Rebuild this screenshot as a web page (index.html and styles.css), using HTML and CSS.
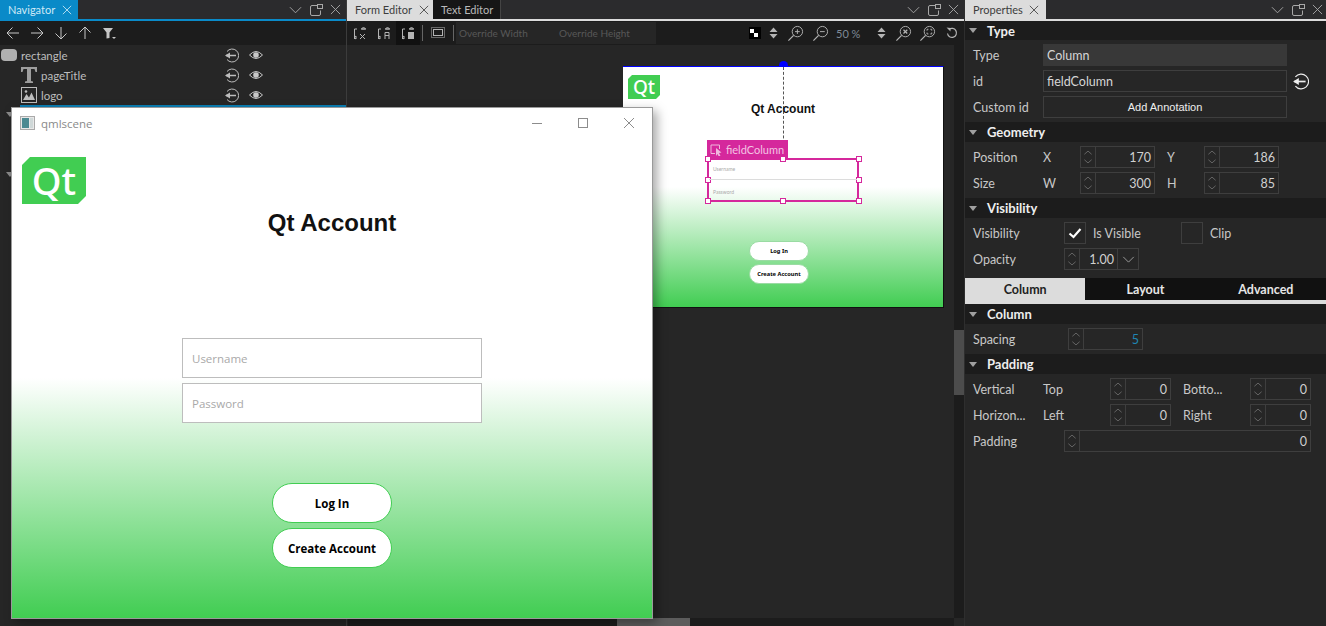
FILE: index.html
```html
<!DOCTYPE html>
<html lang="en">
<head>
<meta charset="utf-8">
<title>Qt Design Studio</title>
<link rel="stylesheet" href="styles.css">
</head>
<body>
<svg class="defs" width="0" height="0">
  <defs>
    <symbol id="i-chev" viewBox="0 0 14 8"><path d="M1 1L7 7L13 1" fill="none" stroke="currentColor"/></symbol>
    <symbol id="i-float" viewBox="0 0 14 14"><path d="M9 2.500H3Q1.500 2.500 1.500 4V11Q1.500 12.500 3 12.500H10Q11.500 12.500 11.500 11V7.500" fill="none" stroke="currentColor"/><rect x="8.500" y="1.500" width="5" height="4" fill="none" stroke="currentColor"/></symbol>
    <symbol id="i-x" viewBox="0 0 12 12"><path d="M1 1L11 11M11 1L1 11" fill="none" stroke="currentColor"/></symbol>
    <symbol id="i-link" viewBox="0 0 15 15"><path d="M3 3.500A6.500 6.500 0 1 1 3 11.500" fill="none" stroke="currentColor"/><path d="M2 7.500H12" stroke="currentColor" stroke-width="1.500"/><path d="M1 7.500L6 4.500V10.500Z" fill="currentColor"/></symbol>
    <symbol id="i-eye" viewBox="0 0 14 10"><path d="M.5 5Q7 -2 13.500 5Q7 12 .5 5Z" fill="none" stroke="currentColor"/><circle cx="7" cy="5" r="2.800" fill="currentColor"/></symbol>
    <symbol id="i-spin" viewBox="0 0 15 22"><path d="M3.500 8L7.500 4.500L11.500 8M3.500 14L7.500 17.500L11.500 14" fill="none" stroke="#6a6a6a"/></symbol>
    <symbol id="i-updown" viewBox="0 0 9 12"><path d="M.5 5L4.500 .5L8.500 5ZM.5 7L4.500 11.500L8.500 7Z" fill="currentColor"/></symbol>
    <symbol id="i-zoom" viewBox="0 0 18 18"><circle cx="11" cy="7" r="5.500" fill="none" stroke="currentColor"/><path d="M7 11L1.500 16.500" stroke="currentColor" stroke-width="1.300"/></symbol>
    <symbol id="i-caret" viewBox="0 0 8 5"><path d="M0 0H8L4 5Z" fill="currentColor"/></symbol>
  </defs>
</svg>

<div class="desktop">
  <section class="panel nav-panel">
    <div class="tabbar">
      <div class="tab tab-blue">Navigator <svg class="tab-x"><use href="#i-x"/></svg></div>
      <div class="tab-actions">
        <svg class="act-chev"><use href="#i-chev"/></svg>
        <svg class="act-float"><use href="#i-float"/></svg>
        <svg class="act-x"><use href="#i-x"/></svg>
      </div>
    </div>
    <div class="strip strip-blue"></div>
    <div class="toolbar nav-tools">
      <svg class="tool" viewBox="0 0 14 14"><path d="M13 7H1M6.500 1.500L1 7L6.500 12.500" fill="none" stroke="currentColor"/></svg>
      <svg class="tool" viewBox="0 0 14 14"><path d="M1 7H13M7.500 1.500L13 7L7.500 12.500" fill="none" stroke="currentColor"/></svg>
      <svg class="tool" viewBox="0 0 14 14"><path d="M7 1V13M1.500 7.500L7 13L12.500 7.500" fill="none" stroke="currentColor"/></svg>
      <svg class="tool" viewBox="0 0 14 14"><path d="M7 13V1M1.500 6.500L7 1L12.500 6.500" fill="none" stroke="currentColor"/></svg>
      <svg class="tool" viewBox="0 0 14 14"><path d="M1 2H11L7.500 6.500V12L4.500 12.500V6.500Z" fill="currentColor"/><path d="M10 11H14L12 13Z" fill="currentColor"/></svg>
    </div>
    <div class="tree">
      <div class="node">
        <span class="node-main"><span class="ico-rect"></span><span class="node-name">rectangle</span></span>
        <svg class="node-link"><use href="#i-link"/></svg><svg class="node-eye"><use href="#i-eye"/></svg>
      </div>
      <div class="node node-child">
        <span class="node-main"><svg class="ico-t" viewBox="0 0 16 16"><path d="M0 0H16V5H14.500L13.500 2H10V14L12 14.500V16H4V14.500L6 14V2H2.500L1.500 5H0Z" fill="currentColor"/></svg><span class="node-name">pageTitle</span></span>
        <svg class="node-link"><use href="#i-link"/></svg><svg class="node-eye"><use href="#i-eye"/></svg>
      </div>
      <div class="node node-child">
        <span class="node-main"><svg class="ico-img" viewBox="0 0 16 16"><rect x=".5" y=".5" width="15" height="15" fill="none" stroke="currentColor"/><path d="M2 13L5.500 7L8 10.500L10.500 5.500L14 13Z" fill="currentColor"/><circle cx="5" cy="4.500" r="1.300" fill="currentColor"/></svg><span class="node-name">logo</span></span>
        <svg class="node-link"><use href="#i-link"/></svg><svg class="node-eye"><use href="#i-eye"/></svg>
      </div>
      <div class="node-selected"></div>
      <div class="node node-group"><svg class="node-caret"><use href="#i-caret"/></svg></div>
      <div class="node"></div>
      <div class="node"></div>
      <div class="node node-group"><svg class="node-caret"><use href="#i-caret"/></svg></div>
    </div>
  </section>

  <section class="panel form-panel">
    <div class="tabbar">
      <div class="tab tab-light form-tab">Form Editor <svg class="tab-x"><use href="#i-x"/></svg></div>
      <div class="tab tab-dark">Text Editor</div>
      <div class="tab-actions">
        <svg class="act-chev"><use href="#i-chev"/></svg>
        <svg class="act-float"><use href="#i-float"/></svg>
        <svg class="act-x"><use href="#i-x"/></svg>
      </div>
    </div>
    <div class="strip strip-light"></div>
    <div class="toolbar form-tools">
      <span class="ftool"><svg viewBox="0 0 14 14"><path d="M1.500 13V3H4M8 3H13M10.500 1L12.500 3H8.500ZM3 10L1 11.500L3 13ZM7 8L12 13M12 8L7 13" fill="none" stroke="currentColor"/></svg></span>
      <span class="ftool"><svg viewBox="0 0 14 14"><path d="M1.500 13V3H4M8 3H13M10.500 1L12.500 3H8.500ZM3 10L1 11.500L3 13ZM8 13V6.500H12V13M8 9.500H12" fill="none" stroke="currentColor"/></svg></span>
      <span class="ftool ftool-on"><svg viewBox="0 0 14 14"><path d="M1.500 13V3H4M8 3H13M10.500 1L12.500 3H8.500ZM3 10L1 11.500L3 13Z" fill="none" stroke="currentColor"/><rect x="7" y="6" width="6" height="7" fill="currentColor"/></svg></span>
      <span class="tsep"></span>
      <span class="ftool ftool-box"><svg viewBox="0 0 14 14"><rect x=".5" y="1.500" width="13" height="10" fill="none" stroke="currentColor" stroke-dasharray="1 1"/><rect x="2.500" y="3.500" width="9" height="6" fill="none" stroke="currentColor"/></svg></span>
      <span class="tsep"></span>
      <div class="override"><span class="ov-w">Override Width</span><span>Override Height</span></div>
      <div class="zoomtools">
        <span class="checker"><i></i><i></i></span>
        <svg class="updown"><use href="#i-updown"/></svg>
        <svg class="zoomi zoom-in" viewBox="0 0 18 18"><use href="#i-zoom"/><path d="M8.500 7H13.500M11 4.500V9.500" stroke="currentColor"/></svg>
        <svg class="zoomi zoom-out" viewBox="0 0 18 18"><use href="#i-zoom"/><path d="M8.500 7H13.500" stroke="currentColor"/></svg>
        <span class="zoomval">50 %</span>
        <svg class="updown updown2"><use href="#i-updown"/></svg>
        <svg class="zoomi zoom-x" viewBox="0 0 18 18"><use href="#i-zoom"/><path d="M9 5L13 9M13 5L9 9" stroke="currentColor" stroke-width="1.300"/></svg>
        <svg class="zoomi zoom-all" viewBox="0 0 18 18"><use href="#i-zoom"/><path d="M8.500 6V4.500H10M12 4.500H13.500V6M13.500 8V9.500H12M10 9.500H8.500V8" fill="none" stroke="currentColor"/></svg>
        <svg class="undo" viewBox="0 0 12 12"><path d="M3 2.500A4.500 4.500 0 1 1 1.500 6.500" fill="none" stroke="currentColor" stroke-width="1.200"/><path d="M.5 .5L4.500 1V4.500Z" fill="currentColor"/></svg>
      </div>
    </div>
    <div class="form-body">
      <div class="stage">
        <div class="stage-canvas">
          <div class="stage-anchor"></div>
          <div class="stage-dash"></div>
          <div class="stage-logo"><span>Qt</span></div>
          <div class="stage-title">Qt Account</div>
          <div class="stage-field stage-user">Username</div>
          <div class="stage-field stage-pass">Password</div>
          <div class="stage-btn stage-login">Log In</div>
          <div class="stage-btn stage-create">Create Account</div>
          <div class="sel">
            <div class="sel-label"><svg viewBox="0 0 12 12"><path d="M9.500 5V1H1V9.500H5" fill="none" stroke="#f0b8dd"/><path d="M6 4L11.500 8.500L9 9L10.500 12L8.500 12L7.500 10L6 12Z" fill="#f0b8dd"/></svg>fieldColumn</div>
            <i class="h h-tl"></i><i class="h h-tc"></i><i class="h h-tr"></i>
            <i class="h h-ml"></i><i class="h h-mr"></i>
            <i class="h h-bl"></i><i class="h h-bc"></i><i class="h h-br"></i>
            <div class="sel-mid"></div>
          </div>
        </div>
        <div class="vscroll"><div class="vthumb"></div></div>
      </div>
      <div class="hscroll"><div class="hthumb"></div></div>
    </div>
  </section>

  <section class="panel prop-panel">
    <div class="tabbar">
      <div class="tab tab-light prop-tab">Properties <svg class="tab-x"><use href="#i-x"/></svg></div>
      <div class="tab-actions">
        <svg class="act-chev"><use href="#i-chev"/></svg>
        <svg class="act-float"><use href="#i-float"/></svg>
        <svg class="act-x"><use href="#i-x"/></svg>
      </div>
    </div>
    <div class="strip strip-light"></div>

    <div class="sec sec-first"><svg class="sec-caret"><use href="#i-caret"/></svg>Type</div>
    <div class="row row-first"><span class="lab w70">Type</span><span class="field field-fill">Column</span></div>
    <div class="row"><span class="lab w70">id</span><span class="field">fieldColumn</span><svg class="id-link"><use href="#i-link"/></svg></div>
    <div class="row row-last"><span class="lab w70">Custom id</span><span class="field field-btn">Add Annotation</span></div>

    <div class="sec"><svg class="sec-caret"><use href="#i-caret"/></svg>Geometry</div>
    <div class="row row-first"><span class="lab w70">Position</span><span class="lab w37">X</span>
      <span class="spin w75"><svg class="spin-a"><use href="#i-spin"/></svg><span class="spin-v">170</span></span><span class="lab lab-gap w37">Y</span>
      <span class="spin w75"><svg class="spin-a"><use href="#i-spin"/></svg><span class="spin-v">186</span></span></div>
    <div class="row row-last"><span class="lab w70">Size</span><span class="lab w37">W</span>
      <span class="spin w75"><svg class="spin-a"><use href="#i-spin"/></svg><span class="spin-v">300</span></span><span class="lab lab-gap w37">H</span>
      <span class="spin w75"><svg class="spin-a"><use href="#i-spin"/></svg><span class="spin-v">85</span></span></div>

    <div class="sec"><svg class="sec-caret"><use href="#i-caret"/></svg>Visibility</div>
    <div class="row row-first"><span class="lab w91">Visibility</span>
      <span class="check"><svg viewBox="0 0 14 12"><path d="M1.500 6.500L5.500 10L12.500 2" fill="none" stroke="#fff" stroke-width="2.200"/></svg></span><span class="lab w88">Is Visible</span>
      <span class="check"></span><span class="lab">Clip</span></div>
    <div class="row row-op"><span class="lab w91">Opacity</span>
      <span class="spin w75"><svg class="spin-a"><use href="#i-spin"/></svg><span class="spin-v op-v">1.00</span><span class="op-drop"><svg><use href="#i-chev"/></svg></span></span></div>

    <div class="ptabs"><span class="ptab ptab-on">Column</span><span class="ptab">Layout</span><span class="ptab">Advanced</span></div>
    <div class="strip-ptabs"></div>

    <div class="sec"><svg class="sec-caret"><use href="#i-caret"/></svg>Column</div>
    <div class="row row-first row-last"><span class="lab w95">Spacing</span>
      <span class="spin w75"><svg class="spin-a"><use href="#i-spin"/></svg><span class="spin-v spin-blue">5</span></span></div>

    <div class="sec"><svg class="sec-caret"><use href="#i-caret"/></svg>Padding</div>
    <div class="row row-first"><span class="lab w70">Vertical</span><span class="lab w67">Top</span>
      <span class="spin w61"><svg class="spin-a"><use href="#i-spin"/></svg><span class="spin-v">0</span></span><span class="lab lab-gap w67">Botto...</span>
      <span class="spin w61"><svg class="spin-a"><use href="#i-spin"/></svg><span class="spin-v">0</span></span></div>
    <div class="row"><span class="lab w70">Horizon...</span><span class="lab w67">Left</span>
      <span class="spin w61"><svg class="spin-a"><use href="#i-spin"/></svg><span class="spin-v">0</span></span><span class="lab lab-gap w67">Right</span>
      <span class="spin w61"><svg class="spin-a"><use href="#i-spin"/></svg><span class="spin-v">0</span></span></div>
    <div class="row"><span class="lab w91">Padding</span>
      <span class="spin w247"><svg class="spin-a"><use href="#i-spin"/></svg><span class="spin-v">0</span></span></div>
  </section>

  <div class="window">
    <div class="win-title">
      <svg class="win-ico" viewBox="0 0 15 14"><rect x=".5" y=".5" width="14" height="13" fill="#e8e8e8" stroke="#aaa"/><rect x="2" y="2" width="7" height="10" fill="#4c8a92"/><rect x="10" y="2" width="3" height="10" fill="#cfd8d8"/></svg>
      <span class="win-name">qmlscene</span>
      <svg class="win-btn" viewBox="0 0 12 12"><path d="M1 6.500H11" stroke="#8c8c8c"/></svg>
      <svg class="win-btn" viewBox="0 0 12 12"><rect x="1.500" y="1.500" width="9" height="9" fill="none" stroke="#8c8c8c"/></svg>
      <svg class="win-btn" viewBox="0 0 12 12"><path d="M1 1L11 11M11 1L1 11" fill="none" stroke="#8c8c8c"/></svg>
    </div>
    <div class="app">
      <div class="app-logo"><span>Qt</span></div>
      <h1 class="app-title">Qt Account</h1>
      <div class="app-fields">
        <div class="app-input">Username</div>
        <div class="app-input">Password</div>
      </div>
      <div class="app-buttons">
        <div class="app-btn">Log In</div>
        <div class="app-btn">Create Account</div>
      </div>
    </div>
  </div>
</div>
</body>
</html>
```
FILE: styles.css
```css
* { box-sizing: border-box; }
html, body { margin: 0; height: 100%; overflow: hidden; background: #1c1c1c; }
body { font-family: "Lato", "Noto Sans", sans-serif; color: #d0d0d0; font-size: 12.5px; }
.defs { position: absolute; }
.desktop { position: relative; display: flex; width: 1326px; height: 626px; overflow: hidden; }

.panel { display: flex; flex-direction: column; background: #262626; height: 626px; }
.nav-panel { width: 347px; border-right: 1px solid #3c3c3c; }
.form-panel { width: 618px; border-right: 1px solid #2e2e2e; }
.prop-panel { width: 361px; }

.tabbar { display: flex; height: 19px; background: #2b2b2d; color: #c4c4c4; font-size: 11px; }
.tab { display: flex; align-items: center; padding-left: 8px; height: 19px; white-space: nowrap; }
.tab-blue { width: 78px; background: #0a8ac8; color: #cfe9f6; }
.tab-light { background: #dcdcdc; color: #3d3d3d; }
.form-tab { width: 86px; }
.prop-tab { width: 81px; }
.tab-dark { width: 68px; background: #161616; color: #b9b9b9; border-right: 1px solid #444; }
.tab-x { width: 10px; height: 10px; margin-left: 6px; }
.tab-blue .tab-x { margin-left: 7px; }
.form-tab .tab-x { margin-left: 7px; }
.tab-actions { display: flex; margin-left: auto; align-items: center; gap: 7px; padding-right: 3px; color: #a8a8a8; }
.nav-panel .tab-actions { padding-right: 5px; }
.form-panel .tab-actions { padding-right: 5px; }
.act-chev { width: 13px; height: 8px; }
.act-float { width: 14px; height: 14px; }
.act-x { width: 11px; height: 11px; }

.strip { height: 2px; flex: none; }
.strip-blue { background: #0a8ac8; }
.strip-light { background: #dcdcdc; }

.toolbar { display: flex; align-items: center; height: 24px; flex: none; background: #1c1c1c; color: #c6c6c6; }
.nav-tools { padding-left: 6px; gap: 10px; }
.tool { width: 14px; height: 14px; }

.tree { display: flex; flex-direction: column; color: #bdbdbd; font-size: 11.5px; }
.node { display: flex; align-items: center; height: 20px; position: relative; }
.node-main { display: flex; align-items: center; width: 223px; }
.node-child .node-main { padding-left: 21px; }
.node-name { margin-left: 4px; }
.ico-rect { width: 16px; height: 12px; margin-left: 1px; background: #b0b0b0; border-radius: 4px; }
.ico-t { width: 16px; height: 16px; color: #9e9e9e; }
.ico-img { width: 16px; height: 16px; color: #bdbdbd; }
.node-link { width: 15px; height: 15px; margin-left: 1px; color: #bdbdbd; }
.node-eye { width: 14px; height: 10px; margin-left: 10px; color: #c8c8c8; }
.node-selected { height: 2px; margin-left: 20px; background: #0a7fb5; }
.node-group { height: 20px; padding-left: 6px; }
.node-caret { width: 8px; height: 5px; color: #8a8a8a; margin-top: -6px; }

.form-tools { padding-left: 1px; position: relative; }
.ftool { display: flex; align-items: center; justify-content: center; width: 24px; height: 24px; color: #b4b4b4; }
.ftool svg { width: 14px; height: 14px; }
.ftool-on { background: #111; }
.ftool-box { margin: 0 1px; }
.tsep { width: 1px; height: 16px; background: #666; margin: 0 2px; }
.override { display: flex; align-items: center; width: 200px; height: 22px; background: #262626; color: #585858; font-size: 10px; padding-left: 3px; }
.ov-w { width: 100px; }
.zoomtools { display: flex; align-items: center; margin-left: 93px; color: #b4b4b4; }
.checker { position: relative; width: 12px; height: 12px; background: #000; flex: none; }
.checker i { position: absolute; width: 4px; height: 4px; background: #fff; }
.checker i:first-child { left: 1px; top: 2px; }
.checker i:last-child { left: 5px; top: 6px; }
.updown { width: 9px; height: 12px; margin-left: 8px; flex: none; }
.updown2 { margin-left: 17px; }
.zoomi { width: 17px; height: 17px; flex: none; }
.zoom-in { margin-left: 9px; }
.zoom-out { margin-left: 8px; }
.zoom-x { margin-left: 9px; }
.zoom-all { margin-left: 7px; }
.zoomval { width: 24px; margin-left: 7px; font-size: 11px; color: #7e8a96; white-space: nowrap; }
.undo { width: 12px; height: 12px; margin-left: 10px; flex: none; }

.form-body { flex: 1; display: flex; flex-direction: column; min-height: 0; margin-left: 1px; }
.stage { flex: 1; display: flex; min-height: 0; }
.stage-canvas { position: relative; flex: 1; background: #262626; }
.stage-canvas::before { content: ""; position: absolute; left: 275px; top: 21px; width: 320px; height: 240px; background: linear-gradient(#fff 50%, #41cd52 100%); border-top: 1px solid #00f; border-right: 1px solid #111; border-bottom: 1px solid #111; }
.vscroll { width: 10px; background: #1c1c1c; flex: none; }
.vthumb { width: 10px; height: 65px; margin-top: 285px; background: #4c4c4c; }
.hscroll { height: 8px; background: #1c1c1c; margin-right: 10px; flex: none; }
.hthumb { width: 73px; height: 8px; margin-left: 269px; background: #5c5c5c; }

.stage-anchor { position: absolute; left: 431px; top: 16px; width: 9px; height: 9px; border-radius: 50%; background: #00f; clip-path: inset(0 0 38% 0); }
.stage-dash { position: absolute; left: 435px; top: 22px; height: 91px; border-left: 1px dashed #555; }
.stage-logo { position: absolute; left: 280px; top: 30px; width: 32px; height: 24px; background: #41cd52; clip-path: polygon(4px 0, 100% 0, 100% calc(100% - 4px), calc(100% - 4px) 100%, 0 100%, 0 4px); color: #fff; font-size: 19px; font-weight: 500; line-height: 24px; text-align: center; font-family: "Noto Sans", sans-serif; }
.stage-title { position: absolute; left: 275px; width: 320px; top: 57px; text-align: center; font: bold 12px/14px "Liberation Sans", sans-serif; color: #111; }
.stage-field { position: absolute; left: 365px; font-size: 5px; color: #aaa; }
.stage-user { top: 121px; }
.stage-pass { top: 144px; }
.stage-btn { position: absolute; left: 401px; width: 60px; height: 20px; border-radius: 10px; background: #fff; border: 1px solid #9adba3; color: #000; font: bold 5.700px/18px "Noto Sans", sans-serif; text-align: center; }
.stage-login { top: 196px; }
.stage-create { top: 219px; }
.sel { position: absolute; left: 359px; top: 113px; width: 152px; height: 44px; border: 2px solid #d5289c; }
.sel-mid { position: absolute; left: 0; right: 0; top: 19px; height: 1px; background: #dcdcdc; }
.sel-label { position: absolute; left: -2px; top: -20px; display: flex; align-items: center; width: 81px; height: 19px; padding-left: 3px; background: #d5289c; color: #f3c3e3; font-size: 11px; white-space: nowrap; }
.sel-label svg { width: 12px; height: 12px; margin-right: 4px; flex: none; }
.h { position: absolute; width: 6px; height: 6px; background: #fff; border: 1px solid #d5289c; }
.h-tl { left: -4px; top: -4px; } .h-tc { left: 71px; top: -4px; } .h-tr { left: 147px; top: -4px; }
.h-ml { left: -4px; top: 17px; } .h-mr { left: 147px; top: 17px; }
.h-bl { left: -4px; top: 38px; } .h-bc { left: 71px; top: 38px; } .h-br { left: 147px; top: 38px; }

.prop-panel .tabbar { color: #3d3d3d; }
.prop-panel .tab-actions { color: #a8a8a8; }
.sec { display: flex; align-items: center; height: 20px; flex: none; background: #1c1c1c; color: #eee; font-weight: 700; font-size: 13px; }
.sec-first { height: 19px; }
.sec-caret { width: 8px; height: 5px; margin: 0 10px 0 4px; color: #a0a0a0; }
.row { display: flex; align-items: center; height: 22px; flex: none; margin: 4px 0 0 8px; color: #c8c8c8; }
.row-first { margin-top: 4px; }
.row-last { margin-bottom: 4px; }
.row-op { margin-bottom: 8px; }
.lab { display: block; flex: none; white-space: nowrap; }
.w70 { width: 70px; } .w37 { width: 37px; } .w91 { width: 91px; } .w88 { width: 88px; } .w95 { width: 95px; } .w67 { width: 67px; }
.lab-gap { margin-left: 12px; }
.field { display: flex; align-items: center; width: 244px; height: 22px; padding-left: 3px; border: 1px solid #3e3e3e; color: #d6d6d6; font-size: 12.5px; }
.field-fill { background: #383838; border-color: #383838; }
.field-btn { justify-content: center; padding: 0; font: 11px "Liberation Sans", sans-serif; color: #eee; }
.id-link { width: 17px; height: 17px; margin-left: 5px; color: #eee; }
.spin { display: flex; align-items: center; height: 22px; flex: none; border: 1px solid #3e3e3e; color: #d0d0d0; }
.w75 { width: 75px; } .w61 { width: 61px; } .w247 { width: 247px; }
.spin-a { width: 15px; height: 20px; flex: none; border-right: 1px solid #3e3e3e; }
.spin-v { flex: 1; text-align: right; padding-right: 3px; }
.spin-blue { color: #1f86b5; }
.op-drop { display: flex; align-items: center; justify-content: center; width: 21px; height: 20px; flex: none; border-left: 1px solid #3e3e3e; color: #a8a8a8; }
.op-drop svg { width: 13px; height: 7px; }
.check { display: flex; align-items: center; justify-content: center; width: 22px; height: 22px; flex: none; margin-right: 7px; border: 1px solid #3e3e3e; }
.check svg { width: 14px; height: 12px; }

.ptabs { display: flex; height: 22px; flex: none; background: #111; }
.ptab { display: flex; align-items: center; justify-content: center; width: 121px; font-weight: 700; font-size: 12.5px; color: #e6e6e6; }
.ptab-on { background: #dcdcdc; color: #222; }
.strip-ptabs { height: 4px; background: #dcdcdc; flex: none; }

.window { position: absolute; left: 11px; top: 107px; width: 642px; height: 512px; background: #fff; border: 1px solid #9a9a9a; box-shadow: 4px 4px 10px rgba(0, 0, 0, .35); display: flex; flex-direction: column; font-family: "Open Sans", sans-serif; }
.win-title { display: flex; align-items: center; height: 30px; flex: none; padding-left: 8px; color: #8a8a8a; font-size: 11.5px; }
.win-ico { width: 15px; height: 14px; margin-right: 6px; }
.win-name { margin-right: auto; }
.win-btn { width: 12px; height: 12px; margin-right: 34px; }
.win-btn:last-child { margin-right: 17px; }
.app { flex: 1; display: flex; flex-direction: column; background: linear-gradient(#fff 50%, #41cd52 100%); }
.app-logo { width: 64px; height: 47px; margin: 19px 0 0 10px; background: #41cd52; clip-path: polygon(8px 0, 100% 0, 100% calc(100% - 8px), calc(100% - 8px) 100%, 0 100%, 0 8px); color: #fff; font: 500 38px/47px "Noto Sans", sans-serif; text-align: center; }
.app-title { margin: 5px 0 0; text-align: center; font: bold 24px/28px "Liberation Sans", sans-serif; color: #111; }
.app-fields { display: flex; flex-direction: column; gap: 5px; width: 300px; margin: 101px auto 0; }
.app-input { height: 40px; padding-left: 9px; background: #fff; border: 1px solid #bdbdbd; color: #a9a9a9; font-size: 11.5px; line-height: 39px; }
.app-buttons { display: flex; flex-direction: column; gap: 5px; width: 120px; margin: 60px auto 0; }
.app-btn { height: 40px; border-radius: 20px; background: #fff; border: 1px solid #41cd52; color: #000; font-weight: 700; font-size: 11.500px; line-height: 39px; text-align: center; white-space: nowrap; }
```
